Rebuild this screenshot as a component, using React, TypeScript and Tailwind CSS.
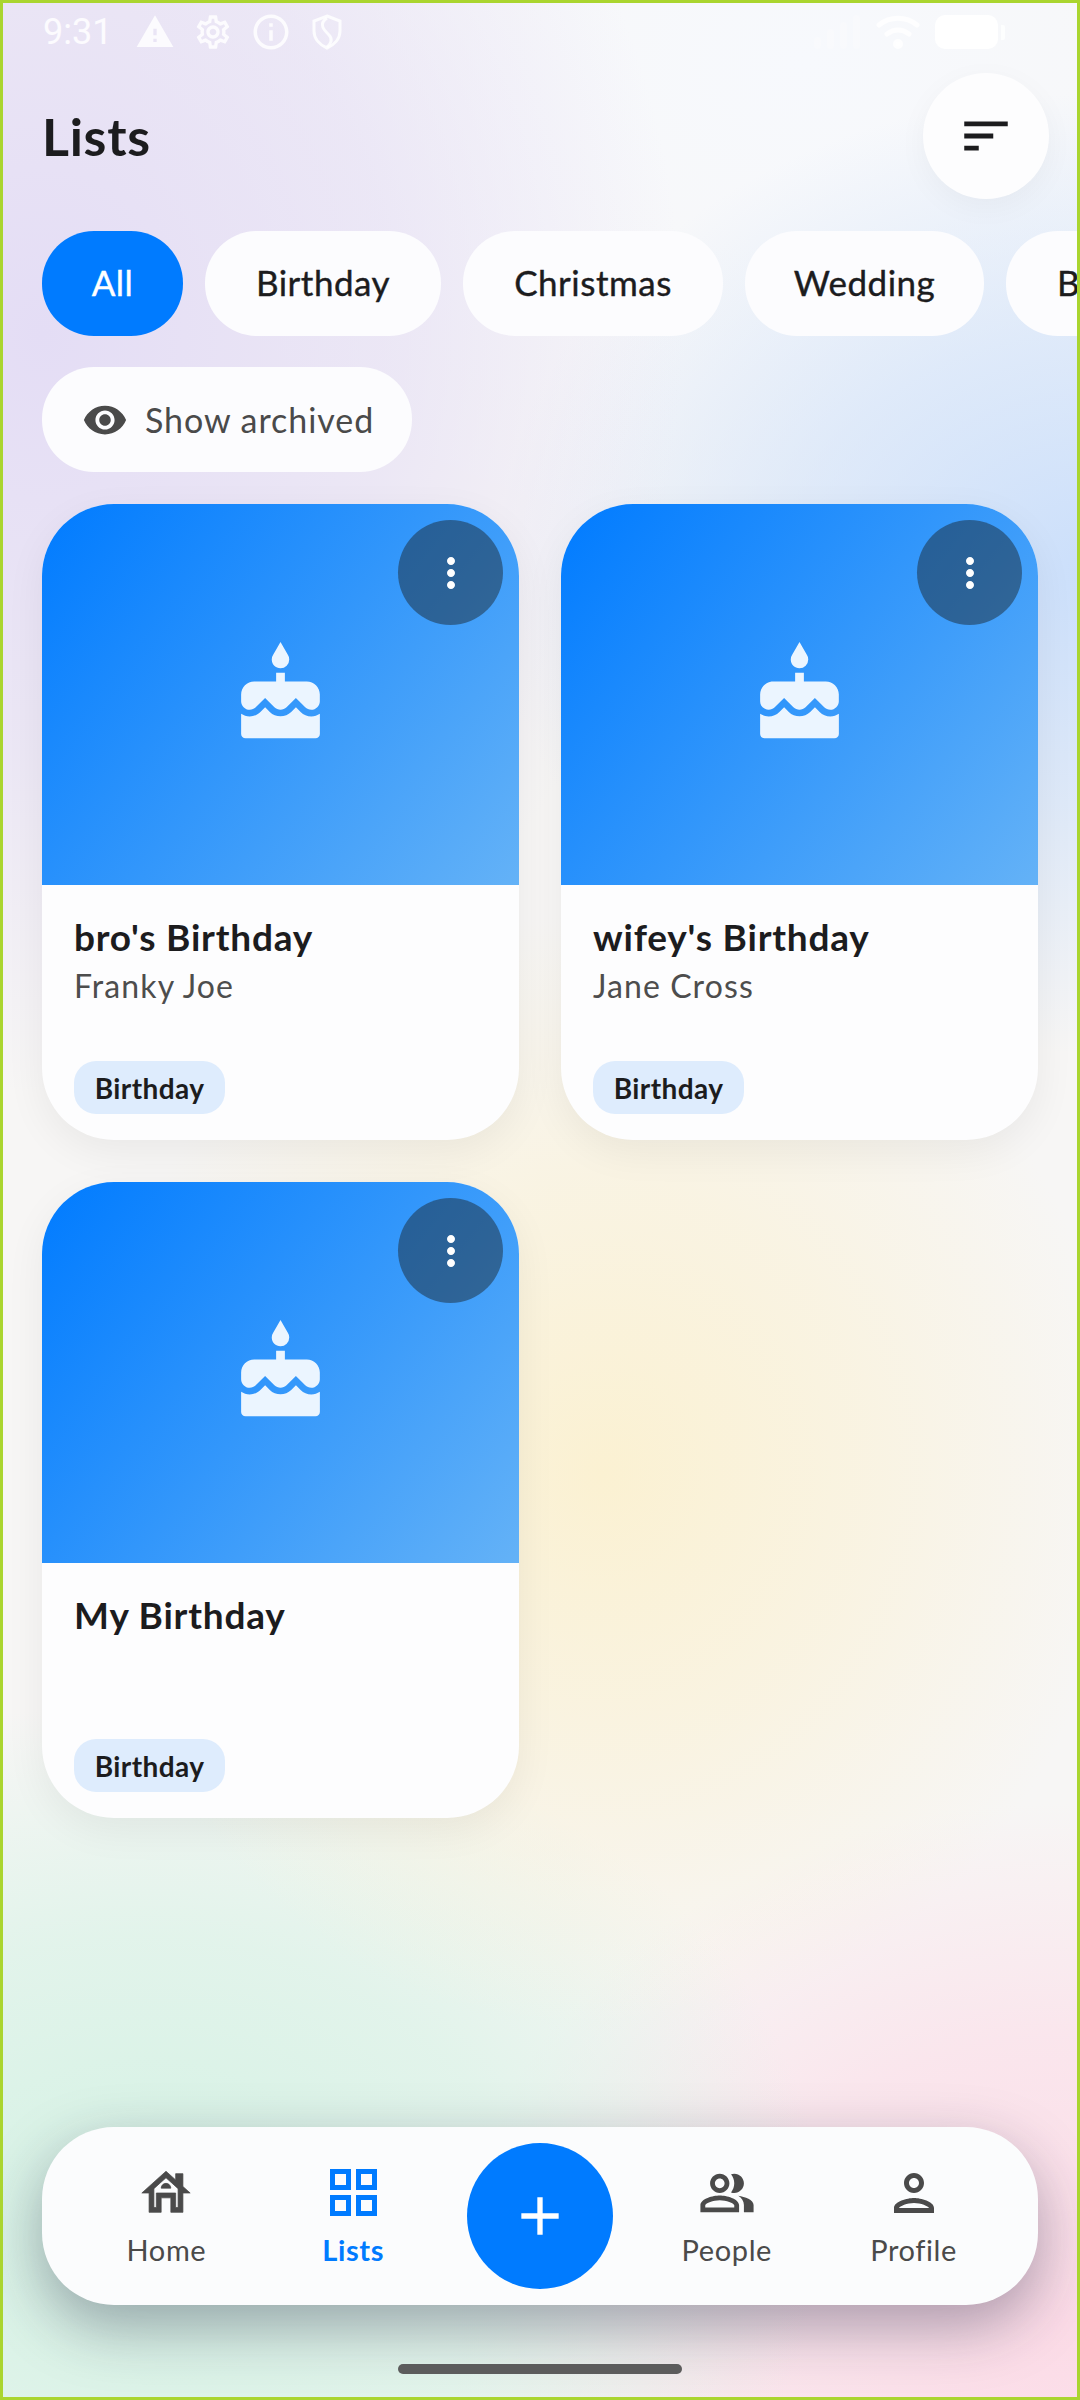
import { MdCake, MdAdd, MdMoreVert, MdSort, MdVisibility, MdWarning, MdOutlineSettings, MdInfoOutline } from "react-icons/md";

const font = "font-['Lato','Liberation_Sans',sans-serif]";

function Chip({ label, active, w }: { label: string; active?: boolean; w: string }) {
  return (
    <div className={`${w} h-[105px] shrink-0 rounded-[52px] flex items-center justify-center pb-[2px] text-[35px] tracking-[0.5px] [-webkit-text-stroke:0.4px] ${active ? "bg-[#007bff] text-white" : "bg-[#fcfcfe] text-[#1c1c1e]"}`}>
      {label}
    </div>
  );
}

function Card({ title, sub }: { title: string; sub?: string }) {
  return (
    <div className="w-[477px] h-[636px] rounded-[72px] overflow-hidden bg-[#fdfdfe] flex flex-col shadow-[0_12px_40px_rgba(0,0,0,0.06)]">
      <div className="h-[381px] shrink-0 bg-[linear-gradient(128.6deg,#007bff_0%,#64b2f7_100%)] flex flex-col">
        <div className="flex justify-end pt-[16px] pr-[16px]">
          <div className="w-[105px] h-[105px] rounded-full bg-[rgba(25,35,40,0.47)] flex items-center justify-center">
            <MdMoreVert size={48} className="text-white" />
          </div>
        </div>
        <div className="flex justify-center pt-[17px]">
          <MdCake size={105} className="text-[#ebf5ff]" />
        </div>
      </div>
      <div className="flex-1 flex flex-col pl-[32px] pt-[30px] pb-[26px]">
        <div className="text-[37px] leading-[44px] font-bold text-[#1c1c1e] tracking-[0.8px]">{title}</div>
        <div className="text-[32px] leading-[40px] mt-[7px] text-[#4d4d4d] tracking-[1.1px]">{sub}</div>
        <div className="mt-auto w-[151px] h-[53px] rounded-[22px] bg-[#deecfd] flex items-center justify-center text-[28px] tracking-[0.4px] font-bold text-[#1c1c1e]">Birthday</div>
      </div>
    </div>
  );
}

function Glyph({ d, size, weight }: { d: string; size: number; weight: number }) {
  return (
    <svg width={size} height={size} viewBox="0 0 24 24" fill="currentColor" stroke="currentColor" strokeWidth={weight}>
      <path d={d} />
    </svg>
  );
}

function NavItem({ icon, label, active }: { icon: React.ReactNode; label: string; active?: boolean }) {
  return (
    <div className={`flex flex-col items-center ${active ? "text-[#007bff]" : "text-[#4a4a4a]"}`}>
      <div className="h-[60px] flex items-center justify-center -mt-[2px]">{icon}</div>
      <div className={`text-[29px] tracking-[0.6px] leading-[36px] mt-[9px] ${active ? "font-bold" : ""}`}>{label}</div>
    </div>
  );
}

export default function App() {
  return (
    <div className={`${font} relative w-[1080px] h-[2400px] overflow-hidden border-[3px] border-[#aad52f] flex flex-col bg-[#f7f6f5] bg-[radial-gradient(ellipse_640px_760px_at_40px_330px,#e4ddf5_0%,rgba(228,221,245,0.6)_55%,rgba(228,221,245,0)_100%),radial-gradient(ellipse_600px_480px_at_1090px_570px,#cbdffb_0%,rgba(203,223,251,0.55)_50%,rgba(203,223,251,0)_100%),radial-gradient(ellipse_520px_560px_at_600px_1470px,#fbf1d2_0%,rgba(251,241,210,0.55)_50%,rgba(251,241,210,0)_100%),radial-gradient(ellipse_680px_520px_at_140px_2220px,#d4f2e4_0%,rgba(212,242,228,0.6)_55%,rgba(212,242,228,0)_100%),radial-gradient(ellipse_620px_520px_at_1060px_2320px,#fcdbe7_0%,rgba(252,219,231,0.6)_55%,rgba(252,219,231,0)_100%),radial-gradient(ellipse_700px_500px_at_800px_60px,#f7f9fd_0%,rgba(247,249,253,0)_100%)]`}>
      <div className="h-[58px] shrink-0 flex items-center pl-[40px] pr-[72px] text-white/85">
        <span className="font-['Roboto'] text-[36px] leading-none">9:31</span>
        <MdWarning size={40} className="ml-[23px]" />
        <MdOutlineSettings size={40} className="ml-[18px]" />
        <MdInfoOutline size={42} className="ml-[17px]" />
        <svg width="30" height="36" viewBox="0 0 30 36" className="ml-[20px]" fill="none" stroke="currentColor" strokeWidth="3">
          <path d="M15 2 L28 7 V17 C28 25 22 31 15 34 C8 31 2 25 2 17 V7 Z" />
          <path d="M15 4 C6 10 12 16 17 21 C21 25 19 30 15 33" />
        </svg>
        <div className="flex-1" />
        <svg width="46" height="34" viewBox="0 0 46 34" fill="currentColor" className="opacity-30">
          <rect x="0" y="22" width="7" height="12" rx="3" />
          <rect x="13" y="14" width="7" height="20" rx="3" />
          <rect x="26" y="7" width="7" height="27" rx="3" />
          <rect x="39" y="0" width="7" height="34" rx="3" />
        </svg>
        <svg width="44" height="34" viewBox="0 0 44 34" fill="none" stroke="currentColor" strokeWidth="5" strokeLinecap="round" className="ml-[16px]">
          <path d="M3 10 C14 1 30 1 41 10" />
          <path d="M11 19 C18 14 26 14 33 19" />
          <circle cx="22" cy="29" r="2.5" fill="currentColor" />
        </svg>
        <div className="ml-[15px] w-[63px] h-[34px] rounded-[10px] bg-white" />
        <div className="ml-[3px] w-[4px] h-[15px] rounded-r-[2px] bg-white/80" />
      </div>

      <div className="flex items-center justify-between pl-[39px] pr-[28px] pt-[12px]">
        <h1 className="text-[52px] tracking-[0.7px] leading-none font-bold text-[#1c1c1e]">Lists</h1>
        <div className="w-[126px] h-[126px] rounded-full bg-[#fdfdfe] flex items-center justify-center shadow-[0_8px_30px_rgba(0,0,0,0.04)]">
          <MdSort size={58} className="text-[#1c1c1e]" />
        </div>
      </div>

      <div className="flex gap-[22px] pl-[39px] pt-[32px]">
        <Chip label="All" active w="w-[141px]" />
        <Chip label="Birthday" w="w-[236px]" />
        <Chip label="Christmas" w="w-[260px]" />
        <Chip label="Wedding" w="w-[239px]" />
        <div className="w-[200px] h-[105px] shrink-0 rounded-[52px] bg-[#fcfcfe] flex items-center pl-[51px] pb-[2px] text-[35px] [-webkit-text-stroke:0.4px] text-[#1c1c1e]">B</div>
      </div>

      <div className="pl-[39px] pt-[31px]">
        <div className="w-[370px] h-[105px] rounded-[52px] bg-[#fcfcfe] flex items-center pl-[40px] text-[#4a4a4a]">
          <MdVisibility size={46} />
          <span className="ml-[17px] text-[34px] tracking-[0.95px]">Show archived</span>
        </div>
      </div>

      <div className="grid grid-cols-[477px_477px] gap-x-[42px] gap-y-[42px] pl-[39px] pt-[32px]">
        <Card title="bro's Birthday" sub="Franky Joe" />
        <Card title="wifey's Birthday" sub="Jane Cross" />
        <Card title="My Birthday" />
      </div>

      <div className="flex-1" />

      <div className="mx-[39px] h-[178px] shrink-0 rounded-[72px] bg-[#fbfcfd] grid grid-cols-5 items-center px-[31px] shadow-[0_22px_60px_rgba(30,30,60,0.36)]">
        <NavItem
          icon={<Glyph size={58} weight={0.3} d="M19 9.3V4h-3v2.6L12 3 2 12h3v8h5v-6h4v6h5v-8h3l-3-2.7zM17 18h-1v-6H8v6H7v-7.81l5-4.5 5 4.5V18zM10 10h4c0-1.1-.9-2-2-2s-2 .9-2 2z" />}
          label="Home"
        />
        <NavItem
          icon={
            <svg width="47" height="47" viewBox="0 0 47 47" fill="none" stroke="currentColor" strokeWidth="5">
              <rect x="2.5" y="2.5" width="16" height="16" />
              <rect x="28.5" y="2.5" width="16" height="16" />
              <rect x="2.5" y="28.5" width="16" height="16" />
              <rect x="28.5" y="28.5" width="16" height="16" />
            </svg>
          }
          label="Lists"
          active
        />
        <div className="flex justify-center">
          <div className="w-[146px] h-[146px] shrink-0 rounded-full bg-[#007bff] flex items-center justify-center">
            <MdAdd size={64} className="text-white" />
          </div>
        </div>
        <NavItem
          icon={<Glyph size={58} weight={0} d="M16.67 13.13C18.04 14.06 19 15.32 19 17v3h4v-3c0-2.18-3.57-3.47-6.33-3.87zM15 12c2.21 0 4-1.79 4-4s-1.79-4-4-4c-.47 0-.91.1-1.33.24C14.5 5.27 15 6.58 15 8s-.5 2.73-1.33 3.76c.42.14.86.24 1.33.24zM9 12c2.21 0 4-1.79 4-4s-1.79-4-4-4-4 1.79-4 4 1.79 4 4 4zm0-6c1.1 0 2 .9 2 2s-.9 2-2 2-2-.9-2-2 .9-2 2-2zM9 13c-2.67 0-8 1.34-8 4v3h16v-3c0-2.66-5.33-4-8-4zm6 5H3v-.99C3.2 16.29 6.3 15 9 15s5.8 1.29 6 2v1z" />}
          label="People"
        />
        <NavItem
          icon={<Glyph size={60} weight={0} d="M12 6c1.1 0 2 .9 2 2s-.9 2-2 2-2-.9-2-2 .9-2 2-2m0 10c2.7 0 5.8 1.29 6 2H6c.23-.72 3.31-2 6-2m0-12C9.79 4 8 5.79 8 8s1.79 4 4 4 4-1.79 4-4-1.79-4-4-4zm0 10c-2.67 0-8 1.34-8 4v2h16v-2c0-2.66-5.33-4-8-4z" />}
          label="Profile"
        />
      </div>

      <div className="h-[92px] shrink-0 flex justify-center pt-[59px]">
        <div className="w-[284px] h-[10px] rounded-full bg-[#5c5c5c]" />
      </div>
    </div>
  );
}
